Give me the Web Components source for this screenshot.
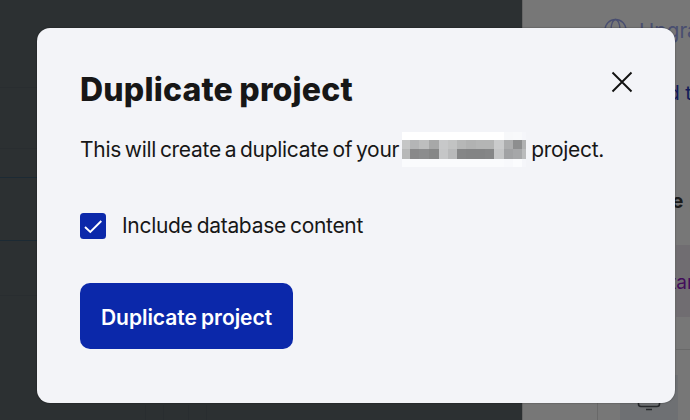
<!DOCTYPE html>
<html lang="en"><head><meta charset="utf-8"><title>Duplicate project</title>
<style>html,body{margin:0;height:100%;overflow:hidden}body{font-family:Inter,"Liberation Sans",sans-serif;color:#171717}</style></head>
<body>
<app-screen>
 <modal-dialog>
  <span slot="title">Duplicate project</span>
  <modal-line slot="text"><span>This will create a duplicate of your</span><masked-name></masked-name><span>project.</span></modal-line>
  <check-field slot="option">Include database content</check-field>
  <primary-button slot="action">Duplicate project</primary-button>
 </modal-dialog>
</app-screen>
<script>
const define=(name,html,setup)=>customElements.define(name,class extends HTMLElement{
  constructor(){super();this.attachShadow({mode:'open'}).innerHTML=html;if(setup)setup(this.shadowRoot);}
});
define('app-screen',`<style>
:host{display:block;position:relative;width:690px;height:420px;overflow:hidden;background:#2c3032}
svg{display:block;position:absolute;inset:0}
.layer{position:absolute;left:37px;top:28px}
</style>
<svg width="690" height="420" viewBox="0 0 690 420" font-family="Inter,Liberation Sans,sans-serif">
<g stroke="#292d30"><path d="M0 87.500H38M0 148.500H38M0 295.500H38M145.500 405V420M163.500 405V420M188.500 405V420M206.500 405V420"/></g>
<g stroke="#1c2a34"><path d="M0 177.500H38M0 240.500H38"/></g>
<rect x="522" width="168" height="420" fill="#777"/>
<path d="M522.500 0V420" stroke="#666"/>
<rect x="676" y="245" width="14" height="72" fill="#706d71"/>
<path d="M676 349.500H690M597.500 400V420" stroke="#696969"/>
<rect x="620" y="375" width="58" height="45" fill="#6e7073"/>
<g fill="none" stroke="#494e70" stroke-width="1.300"><circle cx="615.500" cy="30" r="10.500"/><ellipse cx="615.500" cy="30" rx="4.500" ry="10.500"/></g>
<text x="639" y="38" font-size="20.500" fill="#494e70">Upgra</text>
<text x="667.500" y="99.500" font-size="20" fill="#121a58">d t</text>
<text x="671.500" y="208" font-size="20" font-weight="700" word-spacing="1" fill="#1b1b1b">e p</text>
<text x="670" y="289" font-size="19" fill="#430d5b">tar</text>
<path d="M638.500 398V404Q638.500 406.500 641 406.500H657Q659.500 406.500 659.500 404V398M646 409.500H652" fill="none" stroke="#26282b" stroke-width="1.600"/>
</svg><div class="layer"><slot></slot></div>`);
define('modal-dialog',`<style>
:host{display:flex;flex-direction:column;align-items:flex-start;box-sizing:border-box;width:638px;height:375px;padding:40px 42.500px 0 43px;background:#f3f4f8;border-radius:13px;box-shadow:0 0 1.500px #0009}
header{display:flex;justify-content:space-between;width:100%;height:44px}
h1{margin:0;font-size:32px;line-height:44px;font-weight:800;letter-spacing:.18px;word-spacing:-.8px;white-space:nowrap}
button{display:block;width:22px;height:22px;margin-top:3px;padding:0;border:0;background:none}
svg{display:block}
.text{margin-top:20px}.option{margin-top:45px}.action{margin-top:44px}
</style>
<header><h1><slot name="title"></slot></h1><button aria-label="Close"><svg width="22" height="22" viewBox="0 0 22 22"><path d="M1.500 1.500 20.500 20.500M20.500 1.500 1.500 20.500" stroke="#111" stroke-width="1.900"/></svg></button></header>
<div class="text"><slot name="text"></slot></div><div class="option"><slot name="option"></slot></div><div class="action"><slot name="action"></slot></div>`);
define('modal-line',`<style>:host{display:flex;align-items:center;height:36px;font-size:21px;line-height:36px;letter-spacing:-.29px;word-spacing:-1.800px;white-space:nowrap}</style><slot></slot>`);
define('masked-name',`<style>:host{display:block;width:124px;height:35px;margin:-1px 5px 0 3px}svg{display:block}</style><svg width="124" height="35" shape-rendering="crispEdges"></svg>`,root=>{
 const xs=[0,8,17,27,37,46,55,64,74,83,92,102,111,120,124];
 const rows=[[0,8,'fff fff fff fff fff fff fff fff fff fff fff f7f8fa f8f9fb f5f6fa'],
 [8,9,'c5c6c6 b4b5b6 bdbebe a7a8a8 c7c8c9 c2c3c3 b6b7b7 b1b2b2 b4b5b5 b4b5b5 cacbcc acadae 8d8e8f b0b1b2'],
 [17,10,'b7b8b8 89898a 8c8d8e 868787 c5c6c7 b8b9ba 858687 838485 838485 858687 c5c6c7 a1a2a4 a6a7a9 babbbc'],
 [27,8,'fafbfd fafbfd fafbfd fafbfd fafbfd fafbfd fafbfd fafbfd fafbfd fafbfd fafbfd f8f9fc fbfcfe f5f6fa']];
 root.querySelector('svg').innerHTML=rows.map(([y,h,c])=>c.split(' ').map((v,i)=>`<rect x="${xs[i]}" y="${y}" width="${xs[i+1]-xs[i]}" height="${h}" fill="#${v}"/>`).join('')).join('');
});
define('check-field',`<style>:host{display:flex;align-items:center;gap:16px;height:26px;font-size:21px;letter-spacing:-.3px;word-spacing:-1.500px;line-height:26px;white-space:nowrap}
.box{display:block;width:26px;height:26px;border-radius:3.500px;background:#0b28aa}</style>
<svg class="box" viewBox="0 0 26 26"><path d="M5 14 10.300 19 21.300 8" fill="none" stroke="#fff" stroke-width="1.900"/></svg><span><slot></slot></span>`);
define('primary-button',`<style>:host{display:block}button{display:flex;align-items:center;justify-content:center;width:213px;height:66px;padding:3px 0 0;border:0;border-radius:10px;background:#0b28aa;color:#fff;font:600 21px Inter,"Liberation Sans",sans-serif;letter-spacing:-.05px;word-spacing:-1px;white-space:nowrap}</style><button><slot></slot></button>`);
</script></body></html>
